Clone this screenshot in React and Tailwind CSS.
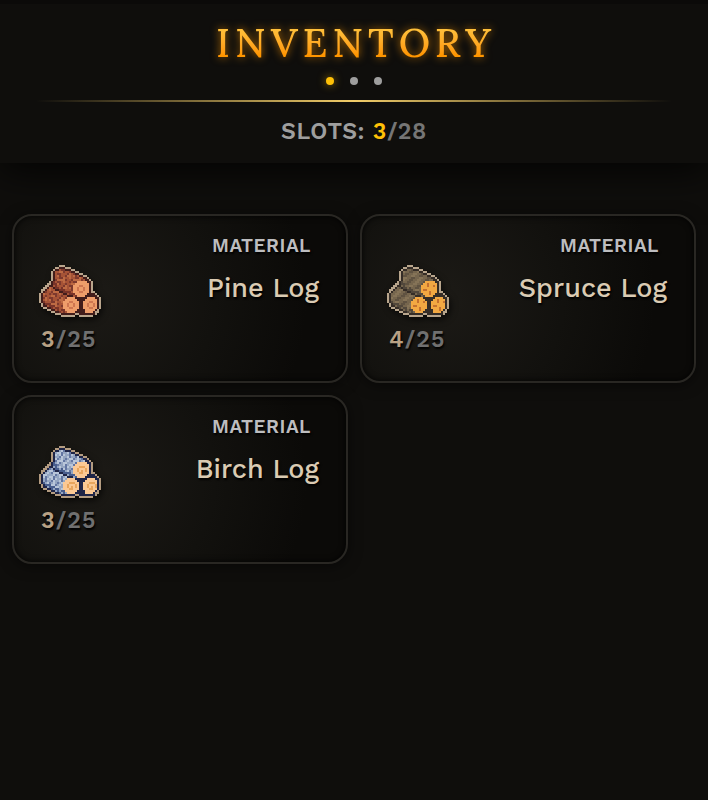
import React, { useState } from 'react';

// o: rim, d: dark edge, b: bark, m: shaded bark, f: cut wood
const LOG_ROWS = [
  '..........ooo..................',
  '........oodddooo...............',
  '.......oddbbbdddoo.............',
  '......odbbbbbbbbddoo...........',
  '......odbbbbbbbbbbddoo.........',
  '......odbbbbbbbbbbbbddoo.......',
  '......odbbbbbbbbbbbbbbddo......',
  '......odbbbbbbbbbbbbbbbddo.....',
  '.....odmbbbbbbbbbbbfffffddo....',
  '....oodmmbbbbbbbbbfffffffdo....',
  '...ooddmmmbbbbbbbffffffffdo....',
  '..oodbbdmmmmbbbbbffffffffdo....',
  '.oodbbbbddmmmmbbbffffffffdo....',
  '.odbbbbbbbddmmmmmffffffffdoo...',
  'odbbbbbbbbbbddmmmmffffffddddo..',
  'odbbbbbbbbbbbbdddmmffffddddddo.',
  'odbbbbbbbbbbbbffffddddddffffddo',
  'odmbbbbbbbbbbffffffddddffffffdo',
  'odmmbbbbbbbbffffffffddfffffffdo',
  '.odmmmbbbbbbffffffffddfffffffdo',
  '.oddmmmmbbbbffffffffddfffffffdo',
  '..ooddmmmmbbffffffffddfffffffdo',
  '....ooddmmmmmffffffddddfffffdo.',
  '......ooddmmmmffffdddddffffdoo.',
  '........ooodddddddooddddddddo..',
  '...........ooooooo..ooooooo....',
];

// top left corner of the 6x6 mark drawn on every cut end
const CUT_ENDS = [
  [18, 9],
  [13, 17],
  [23, 17],
];

const WOODS = {
  pine: {
    colors: { o: '#b9a58c', d: '#421d1b', b: '#a65336', m: '#783328', h: '#bd6a43', s: '#7d392d', f: '#ee9d6a', r: '#cf7650' },
    bark: ['bhbbsshb', 'hhsbbshh', 'bssbhbbs', 'sbbhhsbb', 'bbshbssb', 'hsbbshhb'],
    mark: ['......', '..rr..', '.r..r.', '.r..r.', '..rr..', '......'],
  },
  spruce: {
    colors: { o: '#b8a58c', d: '#352d27', b: '#75654d', m: '#51473b', h: '#857357', s: '#5f5241', f: '#f2a842', r: '#c4702f' },
    bark: ['bbhhbbss', 'ssbbhhbb', 'bbssbbhh', 'hhbbssbb', 'bhhbbssb', 'sbbhhbbs'],
    mark: ['..r...', '..r..r', '......', 'rr....', '...r..', '...r..'],
  },
  birch: {
    colors: { o: '#b39b80', d: '#1f2547', b: '#94a5c1', m: '#485d8d', h: '#b9c6d9', s: '#6376a2', f: '#fbc994', r: '#e9a65d' },
    bark: ['bhhsbhbs', 'hsbhbshh', 'bhsbhhbb', 'sbhhsbbh', 'hbbshbhs', 'bshbbhsb'],
    mark: ['......', '..rrr.', '.r...r', '.r.r.r', '..rr..', '......'],
  },
};

const getPixels = (wood) => {
  const { colors, bark, mark } = WOODS[wood];
  const pixels = [];
  LOG_ROWS.forEach((row, y) => {
    row.split('').forEach((cell, x) => {
      if (cell === '.') return;
      let key = cell;
      if (cell === 'b') key = bark[y % 6][(x + y * 3) % 8];
      if (cell === 'm' && (x * 3 + y * 5) % 7 < 2) key = 'b';
      if (cell === 'f') {
        const end = CUT_ENDS.find(([cx, cy]) => mark[y - cy]?.[x - cx] === 'r');
        if (end) key = 'r';
      }
      pixels.push({ x, y, fill: colors[key] });
    });
  });
  return pixels;
};

const LogSprite = ({ wood }) => (
  <svg
    viewBox="0 0 31 26"
    shapeRendering="crispEdges"
    aria-hidden="true"
    className="h-[52px] w-[62px] drop-shadow-[2px_3px_3px_rgba(0,0,0,0.6)]"
  >
    {getPixels(wood).map((p) => (
      <rect key={`${p.x}-${p.y}`} x={p.x} y={p.y} width="1" height="1" fill={p.fill} />
    ))}
  </svg>
);

const items = [
  { name: 'Pine Log', wood: 'pine', count: 3, max: 25 },
  { name: 'Spruce Log', wood: 'spruce', count: 4, max: 25 },
  { name: 'Birch Log', wood: 'birch', count: 3, max: 25 },
];

const ItemCard = ({ item }) => (
  <li className="flex min-h-[169px] justify-between rounded-[20px] border-2 border-[#292723] bg-[radial-gradient(circle_at_25%_50%,#1c1a16_0%,#12110e_45%,#0b0a08_80%)] pr-[27px] pl-[25px] shadow-[0_2px_14px_rgba(0,0,0,0.5),inset_0_0_6px_rgba(0,0,0,0.9)]">
    <div className="flex flex-col pt-[49px]">
      <LogSprite wood={item.wood} />
      <p className="mt-[7px] pl-[2px] text-[23px] leading-8 font-semibold tracking-wider text-[#707070] [text-shadow:1px_2px_2px_#000]">
        <span className="text-[#b8a184]">{item.count}</span>/{item.max}
      </p>
    </div>
    <div className="flex flex-col items-end pt-[18px]">
      <span className="px-2 text-[19px] leading-6 font-semibold tracking-wide text-[#bdbdbf] [text-shadow:1px_2px_2px_#000]">
        MATERIAL
      </span>
      <h2 className="mt-3 text-[27px] leading-9 font-medium text-[#dacbb3] [text-shadow:1px_2px_2px_#000]">
        {item.name}
      </h2>
    </div>
  </li>
);

const App = () => {
  const [page, setPage] = useState(0);

  return (
    <div className="min-h-screen bg-[#0f0e0c] font-['Work_Sans','Inter',sans-serif]">
      <header className="flex flex-col items-center border-t-4 border-[#0b0a09] bg-[#0f0e0c] px-9 pt-[15px] pb-[15px] shadow-[0_8px_36px_rgba(0,0,0,0.8)]">
        <h1 className="bg-linear-to-b from-[#ffc13b] from-20% to-[#ff9600] to-75% bg-clip-text pl-1 font-['Lora','Liberation_Serif',serif] text-[40px] leading-12 font-medium tracking-[5px] text-transparent drop-shadow-[0_0_4px_rgba(255,152,0,0.7)]">
          INVENTORY
        </h1>
        <div className="mt-[10px] flex gap-4">
          {[0, 1, 2].map((i) => (
            <button
              key={i}
              aria-label={`Page ${i + 1}`}
              onClick={() => setPage(i)}
              className={
                page === i
                  ? 'size-2 rounded-full bg-[#ffc107] shadow-[0_0_8px_rgba(255,193,7,0.6)]'
                  : 'size-2 rounded-full bg-[#9e9e9e]'
              }
            />
          ))}
        </div>
        <div className="mt-[15px] h-[2px] w-full bg-linear-to-r from-transparent via-[#f2cd69] to-transparent" />
        <p className="mt-[14px] text-[23px] leading-8 font-semibold tracking-wide text-[#9e9e9e]">
          SLOTS: <span className="text-[#ffc107]">3</span>
          <span className="text-[#757575]">/28</span>
        </p>
      </header>

      <ul className="grid grid-cols-2 gap-3 px-3 pt-[51px] pb-12">
        {items.map((item) => (
          <ItemCard key={item.name} item={item} />
        ))}
      </ul>
    </div>
  );
};

export default App;
